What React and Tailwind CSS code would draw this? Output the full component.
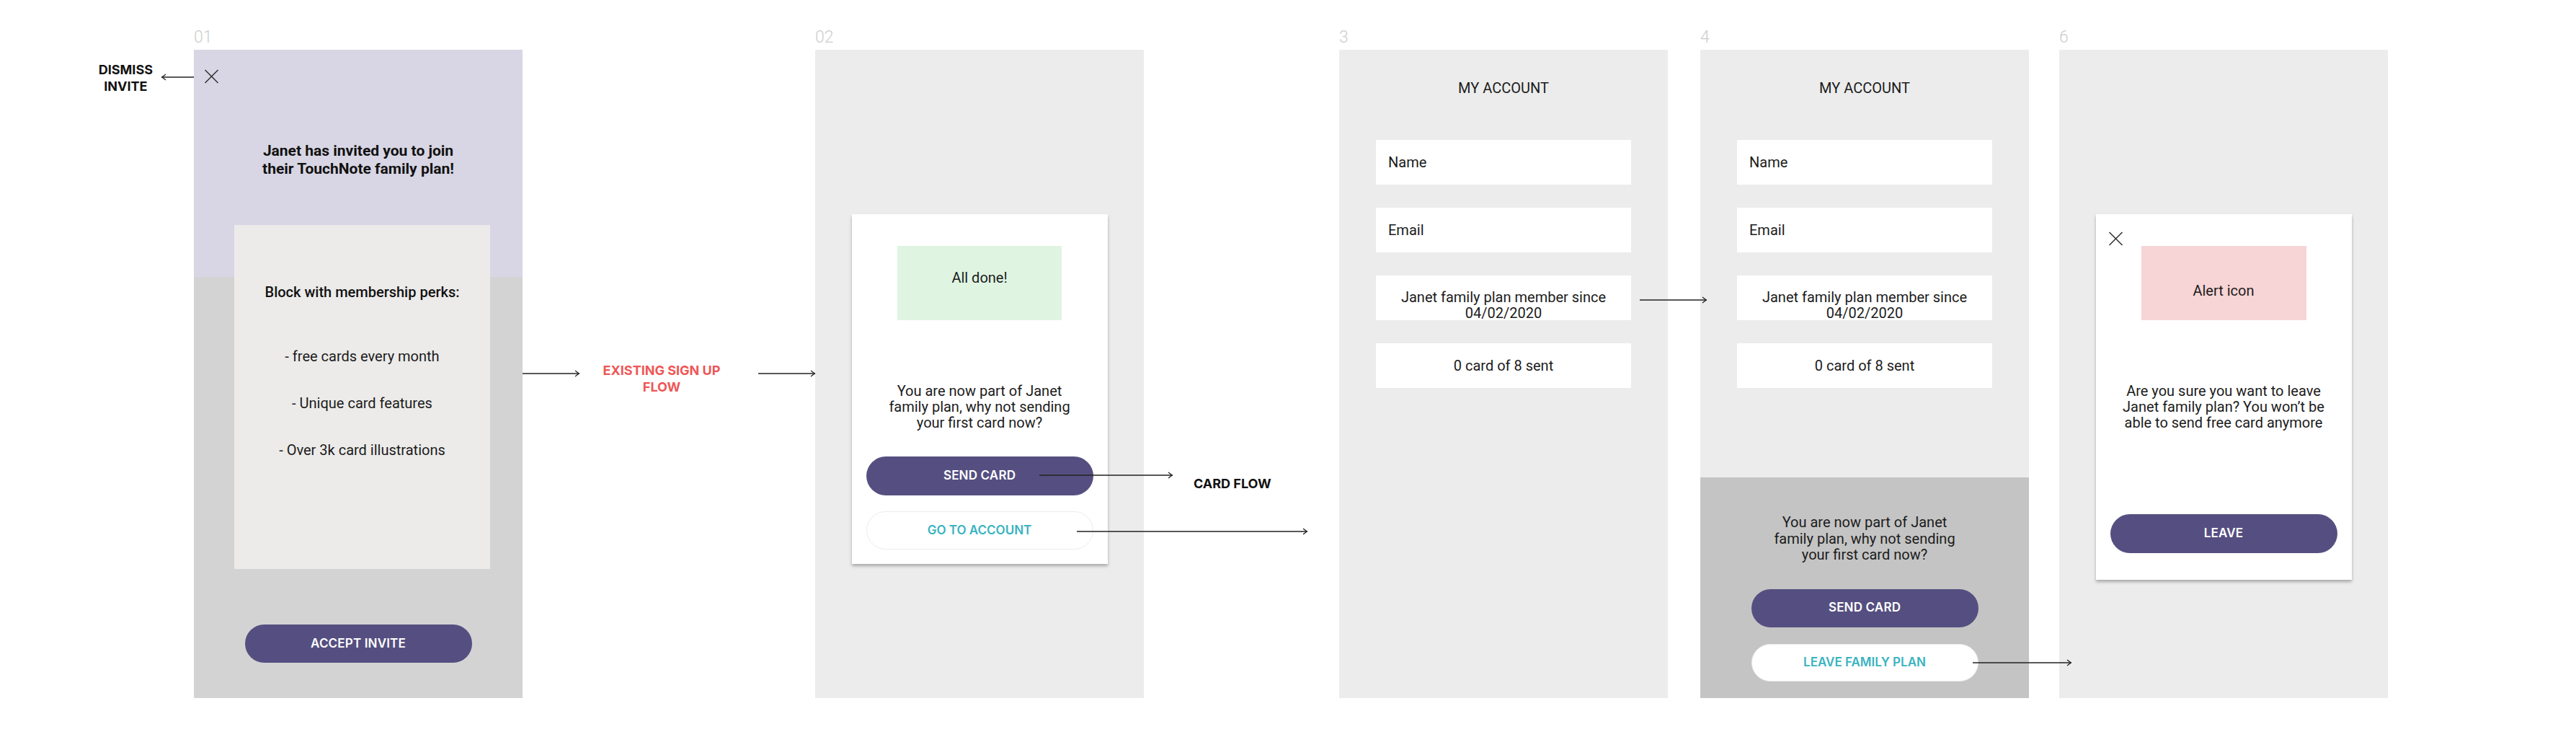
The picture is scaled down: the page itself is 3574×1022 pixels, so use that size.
import React from 'react';

const Arrow = ({ className, w, left = false }) => (
  <svg width={w} height="10" className={`absolute block ${className}`}>
    <line x1="0" y1="5" x2={w} y2="5" stroke="#222" strokeWidth="1.4" />
    {left ? (
      <polyline points="6,1 0.8,5 6,9" fill="none" stroke="#222" strokeWidth="1.2" />
    ) : (
      <polyline points={`${w - 6},1 ${w - 0.8},5 ${w - 6},9`} fill="none" stroke="#222" strokeWidth="1.2" />
    )}
  </svg>
);

const CloseIcon = () => (
  <svg width="21" height="20" viewBox="0 0 21 20" className="block">
    <line x1="1.5" y1="1" x2="19.5" y2="19" stroke="#333" strokeWidth="1.6" />
    <line x1="19.5" y1="1" x2="1.5" y2="19" stroke="#333" strokeWidth="1.6" />
  </svg>
);

const Label = ({ children }) => (
  <div className="h-[28px] mb-[3px] text-[23px] leading-[28px] font-light text-[#cdcdcd]">{children}</div>
);

const PrimaryButton = ({ children, className = '' }) => (
  <div
    className={`w-[315px] rounded-full bg-[#554f81] text-white flex items-center justify-center font-[family-name:Inter,sans-serif] font-semibold text-[17px] tracking-[0.01em] ${className}`}
  >
    {children}
  </div>
);

const OutlineButton = ({ children, className = '' }) => (
  <div
    className={`w-[315px] rounded-full bg-white border border-[#ececec] text-[#38b3c0] flex items-center justify-center font-[family-name:Inter,sans-serif] font-semibold text-[17px] ${className}`}
  >
    {children}
  </div>
);

const Field = ({ children, className = '' }) => (
  <div className={`w-[354px] h-[62px] bg-white text-[20px] leading-[22px] ${className}`}>{children}</div>
);

const AccountFields = () => (
  <>
    <div className="mt-[41px] text-[20px] leading-[24px]">MY ACCOUNT</div>
    <div className="mt-[60px] flex flex-col gap-[32px]">
      <Field className="flex items-center pl-[17px]">Name</Field>
      <Field className="flex items-center pl-[17px]">Email</Field>
      <Field className="text-center pt-[19px]">
        Janet family plan member since
        <br />
        04/02/2020
      </Field>
      <Field className="flex items-center justify-center">0 card of 8 sent</Field>
    </div>
  </>
);

export default function App() {
  return (
    <div className="relative w-[3574px] h-[1022px] bg-white overflow-hidden flex items-start pt-[38px] font-[family-name:Roboto,sans-serif] text-[#1c1c1c]">
      {/* dismiss annotation */}
      <div className="w-[269px] shrink-0 flex justify-end pr-[57px] pt-[47px]">
        <div className="text-center font-[family-name:Inter,sans-serif] font-bold text-[18px] leading-[23px] text-[#111]">
          DISMISS
          <br />
          INVITE
        </div>
      </div>

      {/* 01 invite */}
      <div className="w-[456px] shrink-0 flex flex-col">
        <Label>01</Label>
        <div className="h-[899px] flex flex-col items-center bg-[linear-gradient(to_bottom,#d8d6e4_315px,#d3d3d3_315px)]">
          <div className="self-start ml-[14px] mt-[27px]">
            <CloseIcon />
          </div>
          <div className="mt-[81px] text-center text-[21px] leading-[25px] font-bold text-[#111]">
            Janet has invited you to join
            <br />
            their TouchNote family plan!
          </div>
          <div className="mt-[65px] ml-[11px] w-[355px] h-[477px] bg-[#ecebea] flex flex-col items-center pt-[81px] text-[20px] leading-[24px]">
            <div className="font-medium text-[#111]">Block with membership perks:</div>
            <div className="mt-[65px] flex flex-col items-center gap-[41px]">
              <div>- free cards every month</div>
              <div>- Unique card features</div>
              <div>- Over 3k card illustrations</div>
            </div>
          </div>
          <PrimaryButton className="mt-[77px] h-[53px]">ACCEPT INVITE</PrimaryButton>
        </div>
      </div>

      {/* existing sign up flow */}
      <div className="w-[406px] shrink-0 flex justify-center pt-[464px] pr-[20px]">
        <div className="text-center font-[family-name:Inter,sans-serif] font-bold text-[18px] leading-[23px] text-[#ef5656]">
          EXISTING SIGN UP
          <br />
          FLOW
        </div>
      </div>

      {/* 02 all done */}
      <div className="w-[456px] shrink-0 flex flex-col">
        <Label>02</Label>
        <div className="h-[899px] bg-[#ececec] flex flex-col items-center pt-[228px]">
          <div className="w-[355px] h-[485px] bg-white shadow-[0_3px_4px_rgba(0,0,0,0.28)] flex flex-col items-center pt-[44px]">
            <div className="w-[228px] h-[103px] bg-[#dff5e2] text-center pt-[32px] text-[20px] leading-[24px]">All done!</div>
            <div className="mt-[87px] text-center text-[20px] leading-[22px]">
              You are now part of Janet
              <br />
              family plan, why not sending
              <br />
              your first card now?
            </div>
            <PrimaryButton className="mt-[36px] h-[54px]">SEND CARD</PrimaryButton>
            <OutlineButton className="mt-[22px] h-[53px]">GO TO ACCOUNT</OutlineButton>
          </div>
        </div>
      </div>

      {/* card flow */}
      <div className="w-[271px] shrink-0 pl-[69px] pt-[621px]">
        <div className="font-[family-name:Inter,sans-serif] font-bold text-[18px] leading-[23px] text-[#111]">CARD FLOW</div>
      </div>

      {/* 3 my account */}
      <div className="w-[456px] shrink-0 flex flex-col">
        <Label>3</Label>
        <div className="h-[899px] bg-[#ececec] flex flex-col items-center">
          <AccountFields />
        </div>
      </div>

      <div className="w-[45px] shrink-0" />

      {/* 4 my account with sheet */}
      <div className="w-[456px] shrink-0 flex flex-col">
        <Label>4</Label>
        <div className="h-[899px] bg-[#ececec] flex flex-col">
          <div className="flex-1 flex flex-col items-center">
            <AccountFields />
          </div>
          <div className="h-[306px] bg-[#c4c4c4] flex flex-col items-center pt-[51px]">
            <div className="text-center text-[20px] leading-[22.5px]">
              You are now part of Janet
              <br />
              family plan, why not sending
              <br />
              your first card now?
            </div>
            <PrimaryButton className="mt-[36px] h-[53px]">SEND CARD</PrimaryButton>
            <OutlineButton className="mt-[23px] h-[52px]">LEAVE FAMILY PLAN</OutlineButton>
          </div>
        </div>
      </div>

      <div className="w-[42px] shrink-0" />

      {/* 6 leave confirmation */}
      <div className="w-[456px] shrink-0 flex flex-col">
        <Label>6</Label>
        <div className="h-[899px] bg-[#ececec] flex flex-col items-center pt-[228px]">
          <div className="relative w-[355px] h-[507px] bg-white shadow-[0_3px_4px_rgba(0,0,0,0.28)] flex flex-col items-center pt-[44px]">
            <div className="absolute left-[17px] top-[24px]">
              <CloseIcon />
            </div>
            <div className="w-[229px] h-[103px] bg-[#f7d4d5] text-center pt-[50px] text-[20px] leading-[24px]">Alert icon</div>
            <div className="mt-[87px] text-center text-[20px] leading-[22px]">
              Are you sure you want to leave
              <br />
              Janet family plan? You won’t be
              <br />
              able to send free card anymore
            </div>
            <PrimaryButton className="mt-[116px] h-[54px]">LEAVE</PrimaryButton>
          </div>
        </div>
      </div>

      {/* flow arrows */}
      <Arrow className="left-[224px] top-[102px]" w={45} left />
      <Arrow className="left-[725px] top-[513px]" w={79} />
      <Arrow className="left-[1052px] top-[513px]" w={79} />
      <Arrow className="left-[1442px] top-[654px]" w={185} />
      <Arrow className="left-[1494px] top-[732px]" w={320} />
      <Arrow className="left-[2275px] top-[411px]" w={93} />
      <Arrow className="left-[2737px] top-[914px]" w={137} />
    </div>
  );
}
